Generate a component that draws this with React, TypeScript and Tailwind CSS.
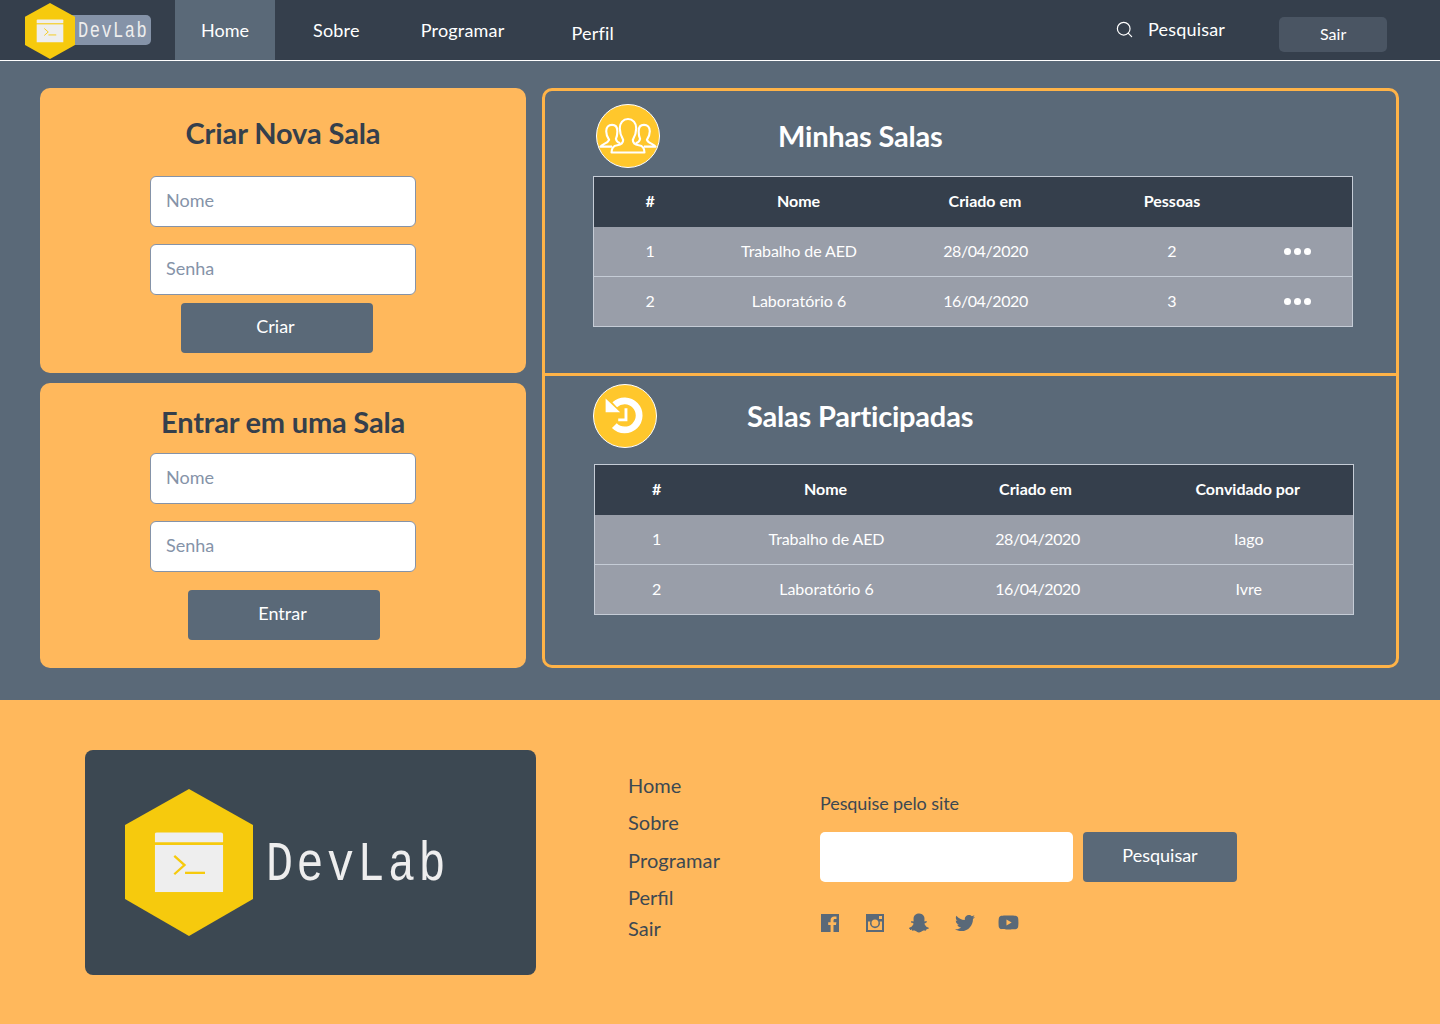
import { FaSnapchatGhost, FaTwitter, FaYoutube } from "react-icons/fa";
import { FiSearch } from "react-icons/fi";

function LogoHex({ className }: { className: string }) {
    return (
        <svg viewBox="0 0 100 115" preserveAspectRatio="none" className={className}>
            <polygon points="50,0 100,28.200 100,86 50,115 0,86 0,28.200" fill="#f6ca0d" />
            <path d="M23.400 35 Q23.400 34 25 34 L75 34 Q76.600 34 76.600 35.500 L76.600 41.600 L23.400 41.600 Z" fill="#eeeeee" />
            <rect x="23.400" y="43.800" width="53.200" height="36.800" fill="#eeeeee" />
            <path d="M38.500 52.300 L46.500 59.500 L38.500 66.700" fill="none" stroke="#f6ca0d" strokeWidth="1.800" />
            <path d="M46.900 65.600 H62.500" fill="none" stroke="#f6ca0d" strokeWidth="1.800" />
        </svg>
    );
}

function PeopleIcon() {
    return (
        <svg viewBox="0 0 64 64" className="w-[64px] h-[64px] rounded-full bg-[#ffc72c] border border-white shrink-0">
            <g fill="none" stroke="#ffffff" strokeWidth="2.200" strokeLinejoin="round">
                <path d="M15.500 43 L3.500 43 C5 40 11 40 12.500 36 C10.500 33 9.500 30.500 9.500 27 C9.500 23 12 20.500 15.500 20.500 C19 20.500 21 23 21 27 C21 30.500 20.500 33 19.500 35 C20 38 22 39 24 39.500" />
                <path d="M48.500 43 L60.500 43 C59 40 53 40 51.500 36 C53.500 33 54.500 30.500 54.500 27 C54.500 23 52 20.500 48.500 20.500 C45 20.500 43 23 43 27 C43 30.500 43.500 33 44.500 35 C44 38 42 39 40 39.500" />
                <path d="M15 49 L49 49 C49 44 47 42 43 41.500 C39.500 41 37 39 37 36 C38.500 33.500 40.500 30 40.500 24 C40.500 18.500 37 14.500 32 14.500 C27 14.500 23.500 18.500 23.500 24 C23.500 30 25.500 33.500 27 36 C27 39 24.500 41 21 41.500 C17 42 15 44 15 49 Z" />
            </g>
        </svg>
    );
}

function HistoryIcon() {
    return (
        <svg viewBox="0 0 64 64" className="w-[64px] h-[64px] rounded-full bg-[#ffc72c] border border-white shrink-0">
            <path d="M21.400 20.400 A15 15 0 1 1 21 42" fill="none" stroke="#ffffff" strokeWidth="7" />
            <polygon points="12,14 27,28 12,28" fill="#ffffff" />
            <path d="M33 24 V36 H25" fill="none" stroke="#ffffff" strokeWidth="3" />
        </svg>
    );
}

function FacebookIcon() {
    return (
        <svg viewBox="0 0 18 18" className="w-[18px] h-[18px]">
            <path
                fill="#5a6978"
                d="M0 0 H18 V18 H12.500 V11 H15 L15.400 8.200 H12.500 V6.500 C12.500 5.600 12.800 5 14 5 H15.500 V2.600 C15 2.500 14.200 2.400 13.300 2.400 C11.100 2.400 9.600 3.700 9.600 6.100 V8.200 H7.200 V11 H9.600 V18 H0 Z"
            />
        </svg>
    );
}

function InstagramIcon() {
    return (
        <svg viewBox="0 0 18 18" className="w-[18px] h-[18px]">
            <path
                fillRule="evenodd"
                fill="#5a6978"
                d="M0 0 H18 V18 H0 Z M2 7.500 V16 H16 V7.500 H13.700 A5 5 0 1 1 4.300 7.500 Z M9 5.500 A3.500 3.500 0 1 0 9 12.500 A3.500 3.500 0 1 0 9 5.500 Z M13 2 V5 H16 V2 Z"
            />
        </svg>
    );
}

function TextInput({ placeholder }: { placeholder: string }) {
    return (
        <input
            placeholder={placeholder}
            className="w-[266px] h-[51px] shrink-0 bg-white border border-[#8593a8] rounded-[6px] px-[15px] pb-[3px] text-[18px] text-[#353f4c] placeholder:text-[#8593a8] outline-none"
        />
    );
}

function Dots() {
    return (
        <span className="flex justify-center gap-[3px] items-center">
            <span className="w-[7px] h-[7px] rounded-full bg-white" />
            <span className="w-[7px] h-[7px] rounded-full bg-white" />
            <span className="w-[7px] h-[7px] rounded-full bg-white" />
        </span>
    );
}

export default function App() {
    return (
        <div className="w-[1440px] h-[1024px] overflow-hidden bg-[#5a6978] font-['Lato','Open_Sans',sans-serif]">
            {/* NAVBAR */}
            <nav className="h-[61px] bg-[#353f4c] border-b border-white flex items-stretch text-white text-[18px] tracking-[0.200px]">
                <div className="w-[175px] pl-[25px] flex items-center shrink-0">
                    <LogoHex className="w-[50px] h-[56px] relative z-10 mt-[1px]" />
                    <div className="w-[81px] h-[30px] -ml-[5px] bg-[#8593a8] rounded-r-[5px] flex items-center pl-[8px] overflow-hidden">
                        <span className="inline-block mt-[3px] scale-y-125 font-['Liberation_Mono',monospace] text-[17px] tracking-[1.500px] text-[#eeeeee]">DevLab</span>
                    </div>
                </div>
                <a className="w-[100px] bg-[#5a6978] flex items-center justify-center tracking-normal">Home</a>
                <a className="ml-[38px] flex items-center">Sobre</a>
                <a className="ml-[61px] flex items-center">Programar</a>
                <a className="ml-[67px] flex items-center pt-[6px]">Perfil</a>
                <div className="ml-[501px] flex items-center pb-[2px]">
                    <FiSearch className="w-[19px] h-[19px] stroke-[1.500]" />
                    <span className="ml-[14px]">Pesquisar</span>
                </div>
                <div className="ml-[54px] pt-[17px]">
                    <button className="w-[108px] h-[35px] pb-[2px] bg-[#4a5563] rounded-[5px] text-[16px] tracking-normal">Sair</button>
                </div>
            </nav>

            {/* CONTEUDO */}
            <main className="h-[639px] px-[40px] pt-[27px] flex gap-[16px]">
                <div className="w-[486px] flex flex-col gap-[10px] shrink-0">
                    <section className="h-[285px] bg-[#ffb85c] rounded-[10px] flex flex-col items-center pt-[27px]">
                        <h2 className="text-[29px] leading-[36px] font-bold text-[#353f4c] tracking-[-0.100px]">Criar Nova Sala</h2>
                        <div className="mt-[25px] flex flex-col gap-[17px]">
                            <TextInput placeholder="Nome" />
                            <TextInput placeholder="Senha" />
                        </div>
                        <button className="w-[192px] h-[50px] mt-[8px] mr-[12px] pb-[3px] pr-[3px] bg-[#5a6978] rounded-[4px] text-white text-[18px]">Criar</button>
                    </section>
                    <section className="h-[285px] bg-[#ffb85c] rounded-[10px] flex flex-col items-center pt-[21px]">
                        <h2 className="text-[29px] leading-[36px] font-bold text-[#353f4c] tracking-[-0.200px]">Entrar em uma Sala</h2>
                        <div className="mt-[13px] flex flex-col gap-[17px]">
                            <TextInput placeholder="Nome" />
                            <TextInput placeholder="Senha" />
                        </div>
                        <button className="w-[192px] h-[50px] mt-[18px] ml-[2px] pb-[3px] pr-[3px] bg-[#5a6978] rounded-[4px] text-white text-[18px]">Entrar</button>
                    </section>
                </div>

                <div className="w-[857px] h-[580px] border-[3px] border-[#ffb347] rounded-[10px] flex flex-col">
                    {/* MINHAS SALAS */}
                    <section className="h-[285px] shrink-0 border-b-[3px] border-[#ffb347] pt-[13px] pl-[48px]">
                        <div className="flex items-center pl-[3px]">
                            <PeopleIcon />
                            <h2 className="ml-[118px] text-[29px] font-bold text-white tracking-[-0.200px]">Minhas Salas</h2>
                        </div>
                        <table className="mt-[8px] w-[760px] table-fixed border border-[#c5ccd6] text-[16px] text-white">
                            <thead>
                                <tr className="h-[50px] bg-[#353f4c] text-[16px]">
                                    <th className="w-[113px] font-bold pb-[2px]">#</th>
                                    <th className="w-[186px] font-bold pb-[2px] pr-[2px]">Nome</th>
                                    <th className="w-[187px] font-bold pb-[2px] pr-[2px]">Criado em</th>
                                    <th className="w-[187px] font-bold pb-[2px] pr-[2px]">Pessoas</th>
                                    <th></th>
                                </tr>
                            </thead>
                            <tbody className="bg-[#999ea9] text-center">
                                <tr className="h-[50px]">
                                    <td>1</td>
                                    <td className="tracking-[-0.100px] pr-[1px]">Trabalho de AED</td>
                                    <td className="tracking-[-0.400px] pr-[1px]">28/04/2020</td>
                                    <td className="pr-[2px]">2</td>
                                    <td className="pr-[24px]"><Dots /></td>
                                </tr>
                                <tr className="h-[50px] border-t border-[#c5ccd6]">
                                    <td className="pb-[2px]">2</td>
                                    <td className="pb-[2px] pr-[1px]">Laboratório 6</td>
                                    <td className="pb-[2px] tracking-[-0.400px] pr-[1px]">16/04/2020</td>
                                    <td className="pb-[2px] pr-[2px]">3</td>
                                    <td className="pr-[24px]"><Dots /></td>
                                </tr>
                            </tbody>
                        </table>
                    </section>

                    {/* SALAS PARTICIPADAS */}
                    <section className="pt-[8px] pl-[49px]">
                        <div className="flex items-center -ml-[1px]">
                            <HistoryIcon />
                            <h2 className="ml-[90px] text-[29px] font-bold text-white tracking-[-0.200px]">Salas Participadas</h2>
                        </div>
                        <table className="mt-[16px] w-[760px] table-fixed border border-[#c5ccd6] text-[16px] text-white">
                            <thead>
                                <tr className="h-[50px] bg-[#353f4c] text-[16px]">
                                    <th className="w-[126px] font-bold pr-[2px] pb-[2px]">#</th>
                                    <th className="w-[212px] font-bold pr-[2px] pb-[2px]">Nome</th>
                                    <th className="w-[210px] font-bold pr-[4px] pb-[2px]">Criado em</th>
                                    <th className="font-bold pb-[2px]">Convidado por</th>
                                </tr>
                            </thead>
                            <tbody className="bg-[#999ea9] text-center">
                                <tr className="h-[50px]">
                                    <td className="pr-[2px]">1</td>
                                    <td className="tracking-[-0.100px]">Trabalho de AED</td>
                                    <td className="tracking-[-0.400px]">28/04/2020</td>
                                    <td className="pl-[2px]">Iago</td>
                                </tr>
                                <tr className="h-[50px] border-t border-[#c5ccd6]">
                                    <td className="pb-[2px] pr-[2px]">2</td>
                                    <td className="pb-[2px]">Laboratório 6</td>
                                    <td className="pb-[2px] tracking-[-0.400px]">16/04/2020</td>
                                    <td className="pb-[2px] pl-[2px]">Ivre</td>
                                </tr>
                            </tbody>
                        </table>
                    </section>
                </div>
            </main>

            {/* RODAPE */}
            <footer className="h-[324px] bg-[#ffb85c] flex pl-[85px] pt-[50px] text-[#3c4852]">
                <div className="w-[451px] h-[225px] bg-[#3c4852] rounded-[8px] flex items-center pl-[40px] shrink-0">
                    <LogoHex className="w-[128px] h-[147px] -mt-[1px]" />
                    <span className="ml-[13px] mt-[6px] inline-block scale-y-125 font-['Liberation_Mono',monospace] text-[45px] tracking-[3.500px] text-[#eeeeee]">DevLab</span>
                </div>
                <ul className="ml-[92px] pt-[21px] w-[192px] text-[20px] leading-[28px]">
                    <li>Home</li>
                    <li className="mt-[9px]">Sobre</li>
                    <li className="mt-[10px] tracking-[0.100px]">Programar</li>
                    <li className="mt-[9px]">Perfil</li>
                    <li className="mt-[3px]">Sair</li>
                </ul>
                <div className="pt-[41px]">
                    <p className="text-[18px] leading-[24px] tracking-[-0.100px]">Pesquise pelo site</p>
                    <div className="mt-[17px] flex gap-[10px]">
                        <input className="w-[253px] h-[50px] bg-white rounded-[5px] outline-none" />
                        <button className="w-[154px] h-[50px] pb-[3px] bg-[#5a6978] rounded-[4px] text-white text-[18px]">Pesquisar</button>
                    </div>
                    <div className="mt-[30px] ml-[1px] flex items-center text-[#5a6978]">
                        <FacebookIcon />
                        <span className="ml-[27px]"><InstagramIcon /></span>
                        <FaSnapchatGhost className="w-[20px] h-[20px] ml-[25px]" />
                        <FaTwitter className="w-[20px] h-[20px] ml-[26px]" />
                        <FaYoutube className="w-[21px] h-[21px] ml-[23px]" />
                    </div>
                </div>
            </footer>
        </div>
    );
}
